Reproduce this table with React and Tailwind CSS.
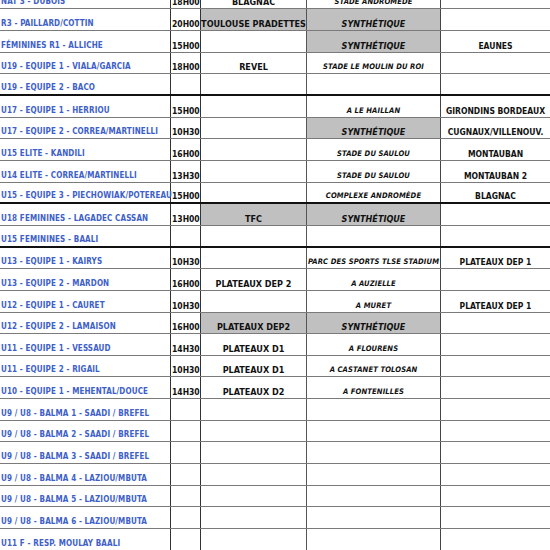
import React from 'react';

const rows = [
  { team: 'NAT 3 - DUBOIS', time: '18H00', adv: 'BLAGNAC', site: 'STADE ANDROMÈDE' },
  { team: 'R3 - PAILLARD/COTTIN', time: '20H00', adv: 'TOULOUSE PRADETTES', advGrey: true, site: 'SYNTHÉTIQUE', siteGrey: true },
  { team: 'FÉMININES R1 - ALLICHE', time: '15H00', site: 'SYNTHÉTIQUE', siteGrey: true, other: 'EAUNES' },
  { team: 'U19 - EQUIPE 1 - VIALA/GARCIA', time: '18H00', adv: 'REVEL', site: 'STADE LE MOULIN DU ROI' },
  { team: 'U19 - EQUIPE 2 - BACO', thick: true },
  { team: 'U17 - EQUIPE 1 - HERRIOU', time: '15H00', site: 'A LE HAILLAN', other: 'GIRONDINS BORDEAUX' },
  { team: 'U17 - EQUIPE 2 - CORREA/MARTINELLI', time: '10H30', site: 'SYNTHÉTIQUE', siteGrey: true, other: 'CUGNAUX/VILLENOUV.' },
  { team: 'U15 ELITE - KANDILI', time: '16H00', site: 'STADE DU SAULOU', other: 'MONTAUBAN' },
  { team: 'U14 ELITE - CORREA/MARTINELLI', time: '13H30', site: 'STADE DU SAULOU', other: 'MONTAUBAN 2' },
  { team: 'U15 - EQUIPE 3 - PIECHOWIAK/POTEREAU', time: '15H00', site: 'COMPLEXE ANDROMÈDE', other: 'BLAGNAC', thick: true },
  { team: 'U18 FEMININES - LAGADEC CASSAN', time: '13H00', adv: 'TFC', advGrey: true, site: 'SYNTHÉTIQUE', siteGrey: true },
  { team: 'U15 FEMININES - BAALI', thick: true },
  { team: 'U13 - EQUIPE 1 - KAIRYS', time: '10H30', site: 'PARC DES SPORTS TLSE STADIUM', other: 'PLATEAUX DEP 1' },
  { team: 'U13 - EQUIPE 2 - MARDON', time: '16H00', adv: 'PLATEAUX DEP 2', site: 'A AUZIELLE' },
  { team: 'U12 - EQUIPE 1 - CAURET', time: '10H30', site: 'A MURET', other: 'PLATEAUX DEP 1' },
  { team: 'U12 - EQUIPE 2 - LAMAISON', time: '16H00', adv: 'PLATEAUX DEP2', advGrey: true, site: 'SYNTHÉTIQUE', siteGrey: true },
  { team: 'U11 - EQUIPE 1 - VESSAUD', time: '14H30', adv: 'PLATEAUX D1', site: 'A FLOURENS' },
  { team: 'U11 - EQUIPE 2 - RIGAIL', time: '10H30', adv: 'PLATEAUX D1', site: 'A CASTANET TOLOSAN' },
  { team: 'U10 - EQUIPE 1 - MEHENTAL/DOUCE', time: '14H30', adv: 'PLATEAUX D2', site: 'A FONTENILLES' },
  { team: 'U9 / U8 - BALMA 1 - SAADI / BREFEL' },
  { team: 'U9 / U8 - BALMA 2 - SAADI / BREFEL' },
  { team: 'U9 / U8 - BALMA 3 - SAADI / BREFEL' },
  { team: 'U9 / U8 - BALMA 4 - LAZIOU/MBUTA' },
  { team: 'U9 / U8 - BALMA 5 - LAZIOU/MBUTA' },
  { team: 'U9 / U8 - BALMA 6 - LAZIOU/MBUTA' },
  { team: 'U11 F - RESP. MOULAY BAALI' },
];

const font = { fontFamily: "'DejaVu Sans Condensed', 'DejaVu Sans', sans-serif" };

function Row({ r }) {
  const line = r.thick ? 'border-b-2 border-b-[#111]' : 'border-b border-b-[#7a7a7a]';
  return (
    <div className={`flex h-[21.667px] ${line}`}>
      <div className="w-[171px] shrink-0 border-r border-r-[#333] flex items-end pl-[1px] whitespace-nowrap text-[8px] leading-[12px] tracking-[0.12px] font-bold text-[#3d60c9] font-stretch-condensed z-10">
        {r.team}
      </div>
      <div className="w-[30px] shrink-0 border-r border-r-[#333] flex items-end pl-[1px] whitespace-nowrap text-[8.5px] leading-[12px] font-bold text-[#111] font-stretch-condensed z-10">
        {r.time}
      </div>
      <div className={`w-[106px] shrink-0 border-r border-r-[#555] flex items-end justify-center whitespace-nowrap text-[9px] leading-[12px] font-bold text-[#111] font-stretch-condensed ${r.advGrey ? 'bg-[#c0c0c0]' : ''}`}>
        {r.adv}
      </div>
      <div className={`w-[134px] shrink-0 border-r border-r-[#444] flex items-end justify-center whitespace-nowrap italic font-bold leading-[12px] text-[#111] font-stretch-condensed ${r.siteGrey ? 'bg-[#c0c0c0] text-[9px]' : 'text-[7.6px] tracking-[0.1px]'}`}>
        {r.site}
      </div>
      <div className="flex-1 flex items-end justify-center whitespace-nowrap text-[8.5px] leading-[12px] font-bold text-[#111] font-stretch-condensed">
        {r.other}
      </div>
    </div>
  );
}

export default function App() {
  return (
    <div className="w-[550px] h-[550px] overflow-hidden bg-white" style={font}>
      <div className="mt-[-12.33px]">
        {rows.map((r, i) => (
          <Row key={i} r={r} />
        ))}
      </div>
    </div>
  );
}
